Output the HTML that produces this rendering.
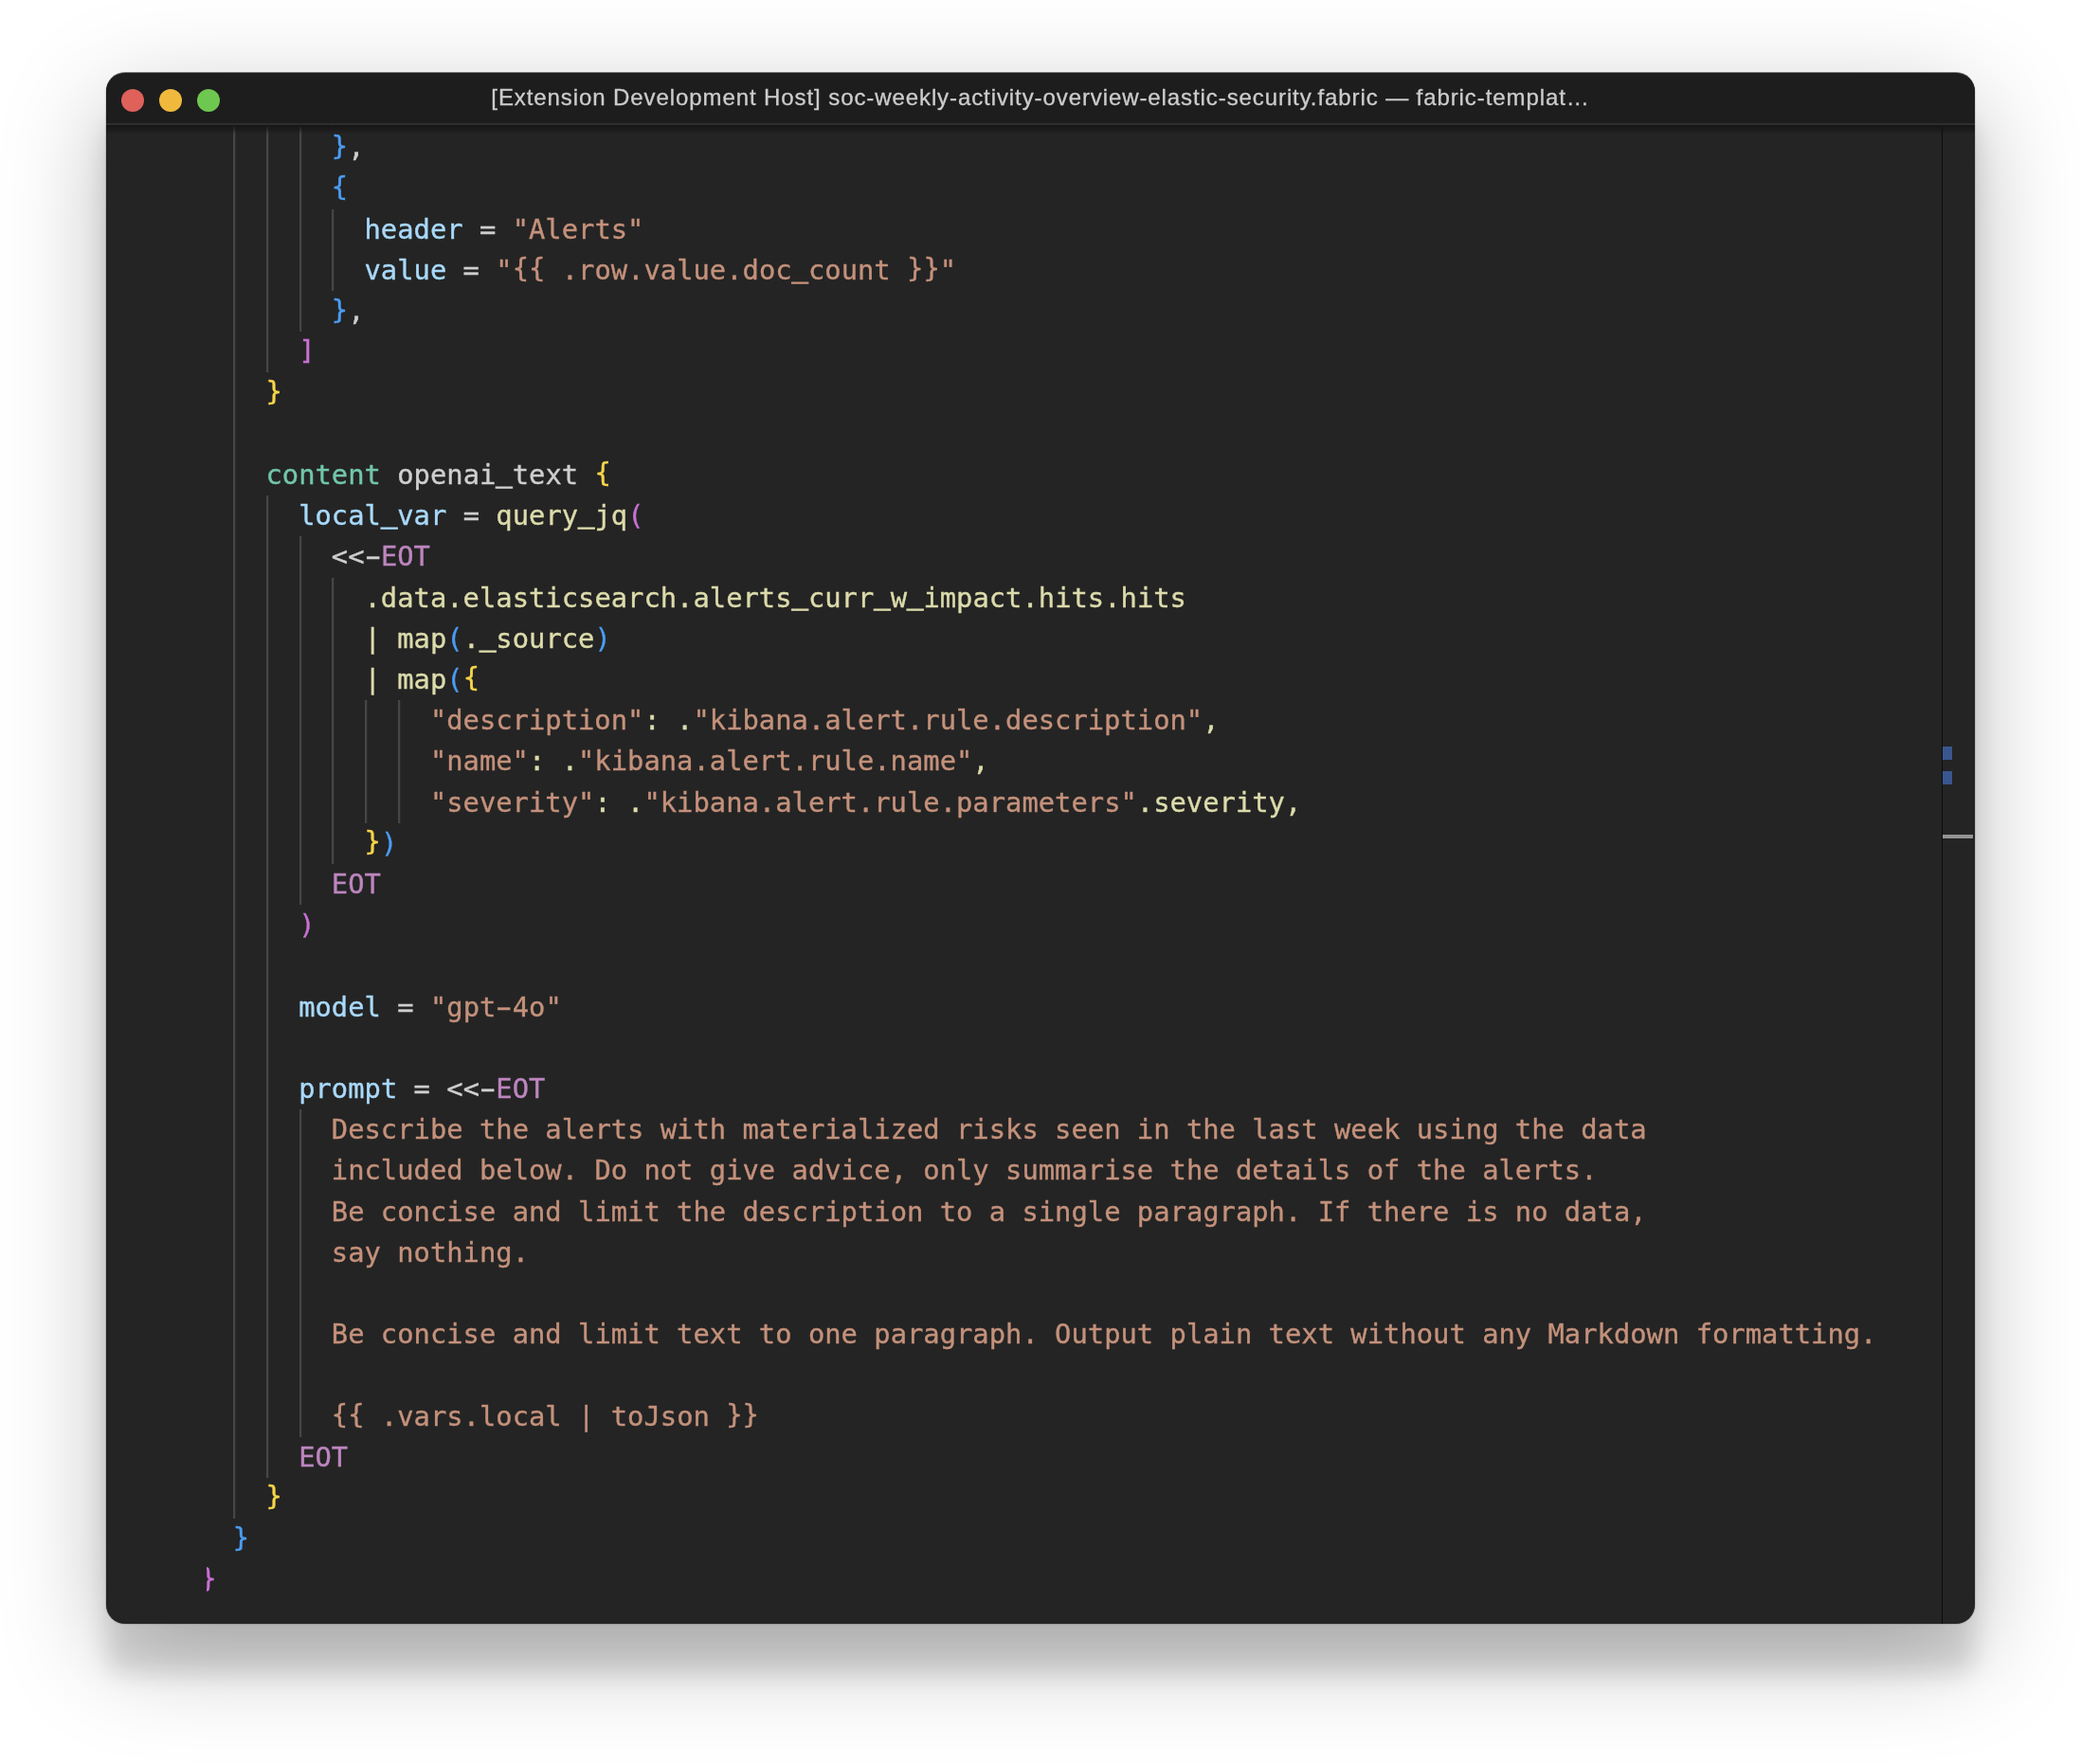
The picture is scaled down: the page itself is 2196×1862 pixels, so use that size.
<!DOCTYPE html>
<html lang="en"><head><meta charset="utf-8"><title>soc-weekly-activity-overview-elastic-security.fabric</title>
<style>
html,body{margin:0;padding:0;background:#fff;}
body{width:2196px;height:1862px;position:relative;overflow:hidden;}
#win{position:absolute;left:112px;top:77px;width:1972px;height:1637px;border-radius:20px;background:#242424;
 box-shadow:0 0 0 1px rgba(0,0,0,.12),0 -1px 0 0 rgba(0,0,0,.45),0 32px 110px rgba(0,0,0,.27),0 52px 26px rgba(0,0,0,.13);overflow:hidden;}
#tb{position:absolute;left:0;top:0;width:100%;height:53px;background:#1d1d1d;}
#tbb{position:absolute;left:0;top:53px;width:100%;height:2px;background:#2e2e2e;}
#sh{position:absolute;left:0;top:55px;width:100%;height:10px;background:linear-gradient(#151515,rgba(36,36,36,0));}
.tl{position:absolute;top:17px;width:24px;height:24px;border-radius:50%;}
#title{position:absolute;left:0;top:0;width:100%;height:54px;line-height:51px;text-align:center;color:#cccccc;
 font-family:"Liberation Sans",sans-serif;font-size:24px;letter-spacing:0.91px;white-space:pre;will-change:transform;-webkit-text-stroke:0.3px;}
#ed{position:absolute;left:0;top:0;width:100%;height:100%;}
.l{position:absolute;left:0;height:43.2px;line-height:43.2px;white-space:pre;font-family:"DejaVu Sans Mono","Liberation Mono",monospace;font-size:28.8px;color:#cfcfcf;-webkit-text-stroke:0.35px;letter-spacing:0.01px;}
.g{position:absolute;width:3px;background:linear-gradient(90deg,#464646 0,#464646 2px,#2c2c2c 2px,#2c2c2c 3px);}
#clip{will-change:transform;position:absolute;left:106px;top:0;right:0;bottom:0;overflow:hidden;}
#ovl{position:absolute;left:1937px;top:55px;width:1px;bottom:0;background:#0b0b0f;}
.mk{position:absolute;left:1938px;width:10px;height:14px;background:#3a568f;}
#cur{position:absolute;left:1938px;top:804px;width:32px;height:4px;background:#939393;}
.d{color:#cfcfcf}
.v{color:#a8d9fb}
.s{color:#c4917b}
.f{color:#dcdbab}
.k{color:#72c6ab}
.e{color:#bd85bf}
.by{color:#f7d54a}
.bp{color:#c970d4}
.bb{color:#4b9cf3}
.u{position:relative;top:-1.5px}
.h{display:inline-block;transform:scaleX(1.75)}
.us{position:relative;top:-3.2px;-webkit-text-stroke:1.1px}
</style></head><body>
<div id="win">
<div id="ed"><div id="clip">
<div class="g" style="left:28.00px;top:14.10px;height:1512.00px"></div>
<div class="g" style="left:63.00px;top:14.10px;height:302.40px"></div>
<div class="g" style="left:63.00px;top:446.10px;height:1036.80px"></div>
<div class="g" style="left:98.00px;top:14.10px;height:259.20px"></div>
<div class="g" style="left:98.00px;top:489.30px;height:388.80px"></div>
<div class="g" style="left:98.00px;top:1094.10px;height:345.60px"></div>
<div class="g" style="left:132.00px;top:14.10px;height:43.20px"></div>
<div class="g" style="left:132.00px;top:143.70px;height:86.40px"></div>
<div class="g" style="left:132.00px;top:532.50px;height:302.40px"></div>
<div class="g" style="left:167.00px;top:662.10px;height:129.60px"></div>
<div class="g" style="left:202.00px;top:662.10px;height:129.60px"></div>
<div class="l" style="left:131.84px;top:57.30px"><span class="bb"><span class="u">}</span></span><span class="d">,</span></div>
<div class="l" style="left:131.84px;top:100.50px"><span class="bb"><span class="u">{</span></span></div>
<div class="l" style="left:166.52px;top:143.70px"><span class="v">header</span><span class="d"> = </span><span class="s">"Alerts"</span></div>
<div class="l" style="left:166.52px;top:186.90px"><span class="v">value</span><span class="d"> = </span><span class="s">"<span class="u">{</span><span class="u">{</span> .row.value.doc<span class="us">_</span>count <span class="u">}</span><span class="u">}</span>"</span></div>
<div class="l" style="left:131.84px;top:230.10px"><span class="bb"><span class="u">}</span></span><span class="d">,</span></div>
<div class="l" style="left:97.16px;top:273.30px"><span class="bp"><span class="u">]</span></span></div>
<div class="l" style="left:62.48px;top:316.50px"><span class="by"><span class="u">}</span></span></div>
<div class="l" style="left:62.48px;top:402.90px"><span class="k">content</span><span class="d"> openai<span class="us">_</span>text </span><span class="by"><span class="u">{</span></span></div>
<div class="l" style="left:97.16px;top:446.10px"><span class="v">local<span class="us">_</span>var</span><span class="d"> = </span><span class="f">query<span class="us">_</span>jq</span><span class="bp">(</span></div>
<div class="l" style="left:131.84px;top:489.30px"><span class="d">&lt;&lt;<span class="h">-</span></span><span class="e">EOT</span></div>
<div class="l" style="left:166.52px;top:532.50px"><span class="f">.data.elasticsearch.alerts<span class="us">_</span>curr<span class="us">_</span>w<span class="us">_</span>impact.hits.hits</span></div>
<div class="l" style="left:166.52px;top:575.70px"><span class="f">| map</span><span class="bb">(</span><span class="f">.<span class="us">_</span>source</span><span class="bb">)</span></div>
<div class="l" style="left:166.52px;top:618.90px"><span class="f">| map</span><span class="bb">(</span><span class="by"><span class="u">{</span></span></div>
<div class="l" style="left:235.88px;top:662.10px"><span class="s">"description"</span><span class="f">: .</span><span class="s">"kibana.alert.rule.description"</span><span class="f">,</span></div>
<div class="l" style="left:235.88px;top:705.30px"><span class="s">"name"</span><span class="f">: .</span><span class="s">"kibana.alert.rule.name"</span><span class="f">,</span></div>
<div class="l" style="left:235.88px;top:748.50px"><span class="s">"severity"</span><span class="f">: .</span><span class="s">"kibana.alert.rule.parameters"</span><span class="f">.severity,</span></div>
<div class="l" style="left:166.52px;top:791.70px"><span class="by"><span class="u">}</span></span><span class="bb">)</span></div>
<div class="l" style="left:131.84px;top:834.90px"><span class="e">EOT</span></div>
<div class="l" style="left:97.16px;top:878.10px"><span class="bp">)</span></div>
<div class="l" style="left:97.16px;top:964.50px"><span class="v">model</span><span class="d"> = </span><span class="s">"gpt<span class="h">-</span>4o"</span></div>
<div class="l" style="left:97.16px;top:1050.90px"><span class="v">prompt</span><span class="d"> = &lt;&lt;<span class="h">-</span></span><span class="e">EOT</span></div>
<div class="l" style="left:131.84px;top:1094.10px"><span class="s">Describe the alerts with materialized risks seen in the last week using the data</span></div>
<div class="l" style="left:131.84px;top:1137.30px"><span class="s">included below. Do not give advice, only summarise the details of the alerts.</span></div>
<div class="l" style="left:131.84px;top:1180.50px"><span class="s">Be concise and limit the description to a single paragraph. If there is no data,</span></div>
<div class="l" style="left:131.84px;top:1223.70px"><span class="s">say nothing.</span></div>
<div class="l" style="left:131.84px;top:1310.10px"><span class="s">Be concise and limit text to one paragraph. Output plain text without any Markdown formatting.</span></div>
<div class="l" style="left:131.84px;top:1396.50px"><span class="s"><span class="u">{</span><span class="u">{</span> .vars.local | toJson <span class="u">}</span><span class="u">}</span></span></div>
<div class="l" style="left:97.16px;top:1439.70px"><span class="e">EOT</span></div>
<div class="l" style="left:62.48px;top:1482.90px"><span class="by"><span class="u">}</span></span></div>
<div class="l" style="left:27.80px;top:1526.10px"><span class="bb"><span class="u">}</span></span></div>
<div class="l" style="left:-6.88px;top:1569.30px"><span class="bp"><span class="u">}</span></span></div>
</div>
<div id="ovl"></div><div class="mk" style="top:711px"></div><div class="mk" style="top:737px"></div><div id="cur"></div>
</div>
<div id="tb"></div><div id="tbb"></div><div id="sh"></div>
<div class="tl" style="left:16px;background:#e0605a"></div><div class="tl" style="left:56px;background:#f0b93e"></div><div class="tl" style="left:96px;background:#6ec74f"></div>
<div id="title">[Extension Development Host] soc-weekly-activity-overview-elastic-security.fabric — fabric-templat…</div>
</div>
</body></html>
